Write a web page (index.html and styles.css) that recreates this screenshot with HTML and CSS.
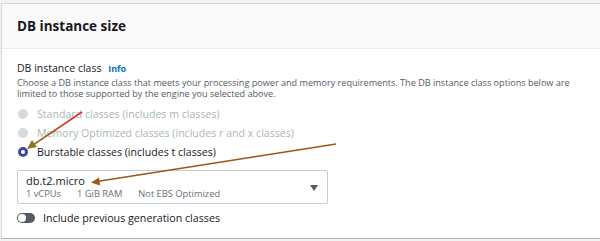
FILE: index.html
```html
<!DOCTYPE html>
<html lang="en">
<head>
  <meta charset="UTF-8">
  <title>DB instance size</title>
  <link rel="stylesheet" href="styles.css">
</head>
<body>
  <section class="panel">
    <header class="panel-header">
      <h2>DB instance size</h2>
    </header>

    <div class="panel-body">
      <div class="field-label">DB instance class <a class="info" href="#">Info</a></div>
      <p class="field-desc">Choose a DB instance class that meets your processing power and memory requirements. The DB instance class options below are limited to those supported by the engine you selected above.</p>

      <ul class="radio-list">
        <li class="radio disabled"><span class="dot"></span>Standard classes (includes m classes)</li>
        <li class="radio disabled"><span class="dot"></span>Memory Optimized classes (includes r and x classes)</li>
        <li class="radio checked"><span class="dot"></span>Burstable classes (includes t classes)</li>
      </ul>

      <div class="select">
        <div class="select-main">
          <div class="select-value">db.t2.micro</div>
          <div class="select-tags">
            <span>1 vCPUs</span>
            <span>1 GiB RAM</span>
            <span>Not EBS Optimized</span>
          </div>
        </div>
        <span class="caret"></span>
      </div>

      <label class="toggle-row">
        <span class="toggle"><span class="knob"></span></span>
        Include previous generation classes
      </label>
    </div>
  </section>

  <!-- annotation arrows drawn over the screenshot -->
  <svg class="arrows" width="600" height="241" viewBox="0 0 600 241">
    <defs>
      <linearGradient id="arrowOne" x1="82" y1="112" x2="28" y2="148" gradientUnits="userSpaceOnUse">
        <stop offset="0" stop-color="#e0301e"/>
        <stop offset="1" stop-color="#8c7420"/>
      </linearGradient>
    </defs>
    <line x1="82" y1="112" x2="33" y2="145" stroke="url(#arrowOne)" stroke-width="1.6"/>
    <polygon points="27,149 32,140 37,147" fill="#8c7420"/>
    <path d="M336 144 L97 181.5" stroke="#9b5818" stroke-width="1.6" fill="none"/>
    <polygon points="91,182.5 99,177.5 100,185.5" fill="#9b5818"/>
  </svg>
</body>
</html>
```

FILE: styles.css
```css
:root {
  --text: #16191f;
  --text-muted: #545b64;
  --text-disabled: #aab7b8;
  --border: #d5dbdb;
  --link: #0073bb;
  --radio: #3b4aa0;
}

body {
  margin: 0;
  padding: 3px 0 0 1px;
  background-color: #f2f3f3;
  font-family: "Open Sans", "Noto Sans", sans-serif;
  color: var(--text);
  overflow: hidden;
}

.panel {
  background: white;
  border: 1px solid var(--border);
  border-right: none;
  border-bottom-color: #aab7b8;
  height: 234px;
}

.panel-header {
  background: #fafafa;
  border-bottom: 1px solid #eaeded;
  height: 44px;
  display: flex;
  align-items: center;
  padding-left: 15px;
}

.panel-header h2 {
  margin: 0;
  font-size: 13.5px;
  font-weight: 700;
}

.panel-body {
  padding: 12px 15px 0;
}

.field-label {
  font-size: 10.5px;
  line-height: 14px;
}

.info {
  color: var(--link);
  font-weight: 700;
  font-size: 9px;
  text-decoration: none;
  margin-left: 4px;
}

.field-desc {
  margin: 2px 0 0;
  font-size: 9.1px;
  line-height: 10.5px;
  color: var(--text-muted);
  max-width: 560px;
}

.radio-list {
  list-style: none;
  margin: 5px 0 0;
  padding: 0;
}

.radio {
  display: flex;
  align-items: center;
  height: 19px;
  font-size: 10.6px;
  gap: 9px;
}

.radio .dot {
  width: 10px;
  height: 10px;
  border-radius: 50%;
  box-sizing: border-box;
  margin-left: 1px;
}

.radio.disabled {
  color: var(--text-disabled);
}

.radio.disabled .dot {
  background: #d5dbdb;
}

.radio.checked .dot {
  border: 3px solid var(--radio);
  background: white;
}

.select {
  margin-top: 9px;
  width: 311px;
  height: 34px;
  box-sizing: border-box;
  border: 1px solid #c6cccf;
  border-radius: 2px;
  display: flex;
  align-items: center;
  justify-content: space-between;
  padding: 0 9px 0 8px;
}

.select-value {
  font-size: 11px;
  line-height: 14px;
}

.select-tags {
  display: flex;
  gap: 16px;
  font-size: 9.3px;
  line-height: 12px;
  color: #687078;
}

.caret {
  width: 0;
  height: 0;
  border-left: 4px solid transparent;
  border-right: 4px solid transparent;
  border-top: 6px solid #545b64;
  margin-top: 2px;
}

.toggle-row {
  display: flex;
  align-items: center;
  gap: 8px;
  margin-top: 7px;
  font-size: 10.7px;
}

.toggle {
  width: 18px;
  height: 10px;
  border-radius: 5px;
  background: #545b64;
  display: flex;
  align-items: center;
  padding-left: 1px;
  box-sizing: border-box;
}

.knob {
  width: 8px;
  height: 8px;
  border-radius: 50%;
  background: white;
}

.arrows {
  position: absolute;
  top: 0;
  left: 0;
  pointer-events: none;
}
```
